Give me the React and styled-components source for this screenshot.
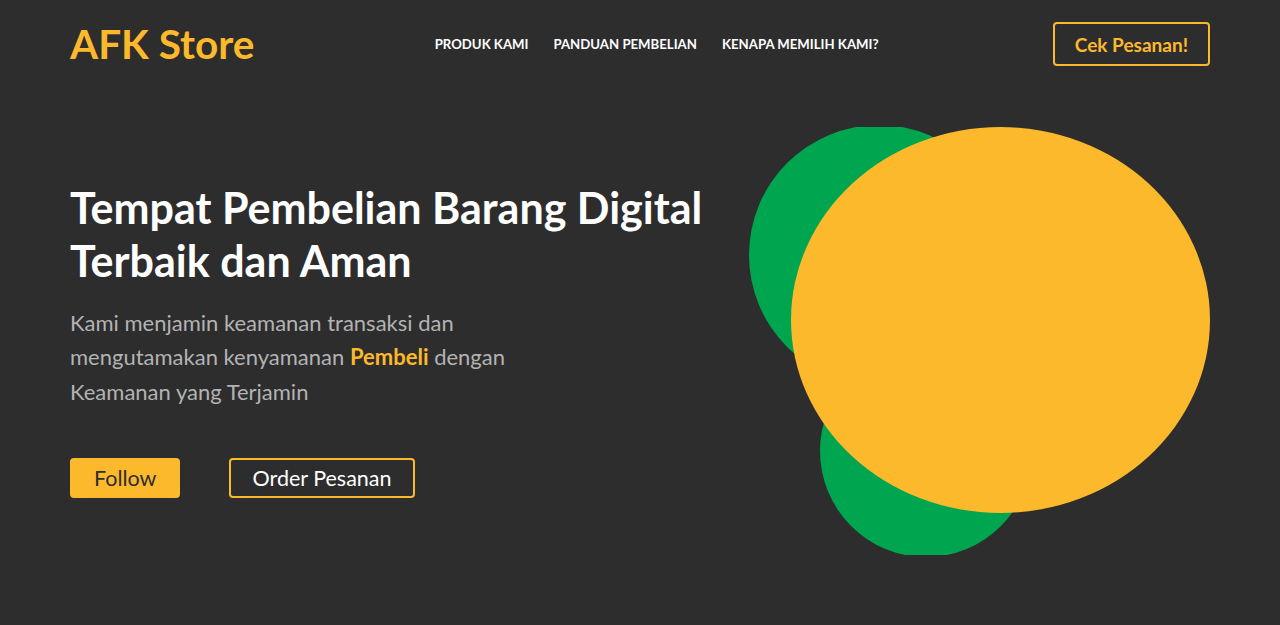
import React from "react";
import styled, { createGlobalStyle } from "styled-components";

const Global = createGlobalStyle`
  html, body { margin: 0; padding: 0; background: #2d2d2d; }
  body { font-family: Lato, "Open Sans", sans-serif; }
  * { box-sizing: border-box; }
`;

const Page = styled.div`
  width: 100%;
  min-height: 625px;
  background: #2d2d2d;
`;

const Container = styled.div`
  max-width: 1140px;
  margin: 0 auto;
`;

const Header = styled.header`
  display: flex;
  align-items: center;
  justify-content: space-between;
  padding: 22px 0;
  height: 88px;
`;

const Logo = styled.div`
  color: #fdb92c;
  font-weight: 700;
  font-size: 40.5px;
  line-height: 44px;
`;

const Nav = styled.nav`
  display: flex;
  gap: 25px;
  margin-left: 6px;
`;

const NavLink = styled.a`
  color: #ffffff;
  font-weight: 700;
  font-size: 13.2px;
  text-transform: uppercase;
  text-decoration: none;
`;

const OutlineButton = styled.button`
  font-family: inherit;
  background: transparent;
  border: 2px solid #fdb92c;
  border-radius: 4px;
  color: ${(p) => p.$color || "#fdb92c"};
  font-weight: ${(p) => p.$weight || 700};
  font-size: ${(p) => p.$size || "19px"};
  height: ${(p) => p.$h || "44px"};
  padding: 0 ${(p) => p.$px || "20px"};
`;

const FillButton = styled.button`
  font-family: inherit;
  background: #fdb92c;
  border: 2px solid #fdb92c;
  border-radius: 4px;
  color: #2d2d2d;
  font-size: 21.5px;
  height: 40px;
  padding: 0 22px;
`;

const Hero = styled.section`
  display: flex;
  justify-content: space-between;
  align-items: center;
  margin-top: 39px;
`;

const Text = styled.div`
  width: 660px;
`;

const Title = styled.h1`
  margin: -3px 0 0;
  color: #fff;
  font-weight: 700;
  font-size: 43px;
  line-height: 53px;
`;

const Lead = styled.p`
  margin: 19px 0 0;
  color: #b3b3b3;
  font-size: 22px;
  line-height: 34.5px;
  width: 450px;
`;

const Highlight = styled.b`
  color: #fdb92c;
`;

const Actions = styled.div`
  display: flex;
  gap: 49px;
  margin-top: 49px;
`;

const Art = styled.svg`
  display: block;
  margin-right: -1px;
`;

export default function App() {
  return (
    <Page>
      <Global />
      <Container>
        <Header>
          <Logo>AFK Store</Logo>
          <Nav>
            <NavLink href="#">Produk Kami</NavLink>
            <NavLink href="#">Panduan Pembelian</NavLink>
            <NavLink href="#">Kenapa Memilih Kami?</NavLink>
          </Nav>
          <OutlineButton>Cek Pesanan!</OutlineButton>
        </Header>
        <Hero>
          <Text>
            <Title>
              Tempat Pembelian Barang Digital
              <br />
              Terbaik dan Aman
            </Title>
            <Lead>
              Kami menjamin keamanan transaksi dan
              <br />
              mengutamakan kenyamanan <Highlight>Pembeli</Highlight> dengan
              <br />
              Keamanan yang Terjamin
            </Lead>
            <Actions>
              <FillButton>Follow</FillButton>
              <OutlineButton $color="#fff" $weight={400} $size="21.5px" $h="40px" $px="21px">
                Order Pesanan
              </OutlineButton>
            </Actions>
          </Text>
          <Art width="463" height="428" viewBox="749 127 463 428">
            <circle cx="880" cy="255" r="130" fill="#00a64f" />
            <circle cx="927" cy="451" r="106" fill="#00a64f" />
            <ellipse cx="1001.5" cy="320" rx="209.5" ry="193" fill="#fdb92c" />
          </Art>
        </Hero>
      </Container>
    </Page>
  );
}
